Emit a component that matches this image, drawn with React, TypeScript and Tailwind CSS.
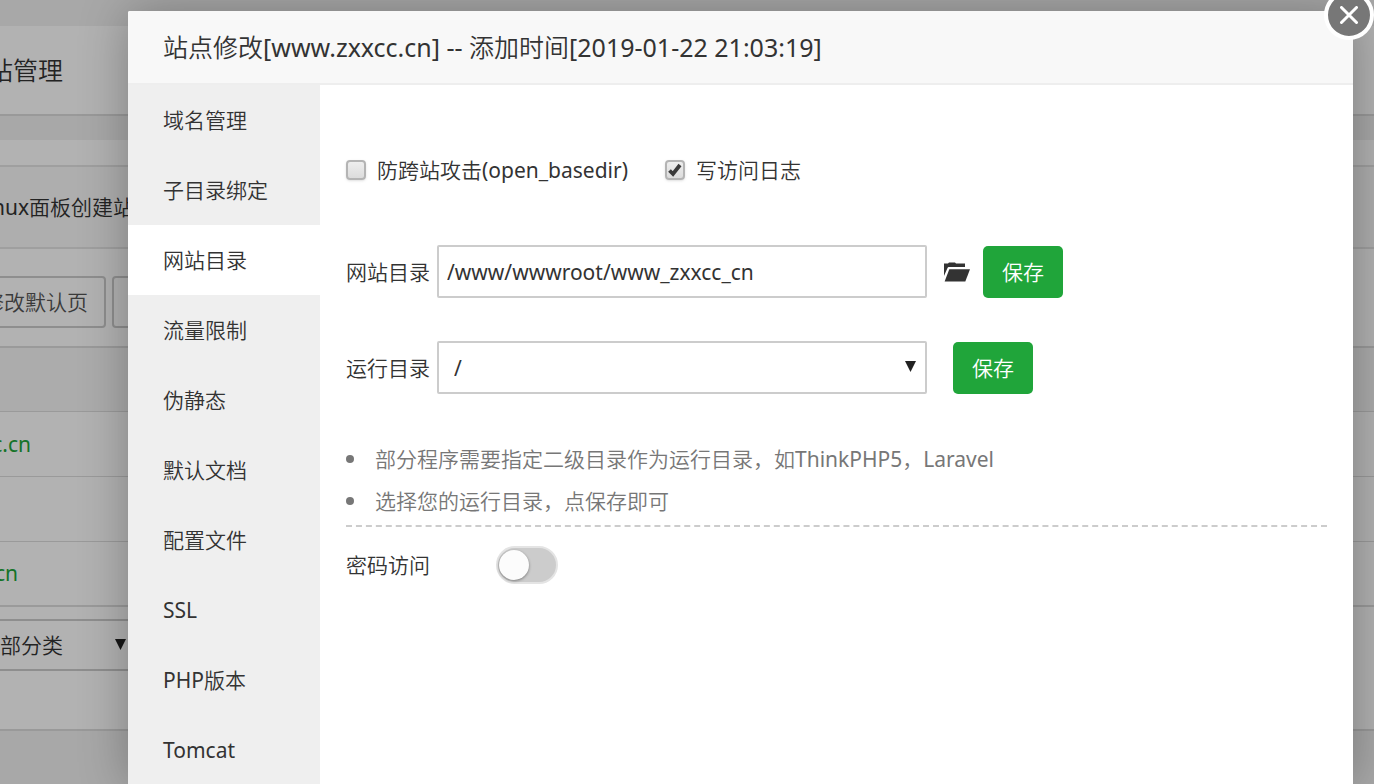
import { useState } from "react";
import clsx from "clsx";

const TABS = [
  "域名管理",
  "子目录绑定",
  "网站目录",
  "流量限制",
  "伪静态",
  "默认文档",
  "配置文件",
  "SSL",
  "PHP版本",
  "Tomcat",
];

const SITES = ["zxxcc.cn", "", "cn"];

export default function App() {
  return (
    <div className="relative h-screen overflow-hidden bg-[#f1f1f1] font-['Noto_Sans','Noto_Sans_CJK_SC_DemiLight','Noto_Sans_CJK_SC_Light','Noto_Sans_CJK_SC',sans-serif] text-[21px] leading-[30px] text-[#333]">
      <SitePage />
      <div className="absolute inset-0 flex items-stretch bg-black/30 pt-[11px] pr-[21px] pl-32">
        <SiteDialog />
      </div>
    </div>
  );
}

/* 背景页面 */
function SitePage() {
  return (
    <div className="pt-[26px]">
      <header className="flex h-[90px] items-center border-b-2 border-[#dcdcdc] bg-white">
        <div className="flex w-[63px] justify-end text-[25px] whitespace-nowrap">网站管理</div>
      </header>

      <main className="mt-6 border-b-2 border-[#dcdcdc] bg-white pt-[25px]">
        <div className="flex h-[84px] items-center border-y-2 border-[#e4e4e4] bg-[#fafafa]">
          <div className="flex w-[155px] justify-end whitespace-nowrap">Linux面板创建站点</div>
        </div>

        <div className="flex h-[97px] items-end gap-[6px] pb-[18px]">
          <div className="flex w-[106px] justify-end">
            <button className="h-[52px] shrink-0 rounded border-2 border-[#ccc] px-4 whitespace-nowrap text-[#555]">
              修改默认页
            </button>
          </div>
          <button className="h-[52px] rounded border-2 border-[#ccc] px-4 text-[#555]">分类</button>
        </div>

        <table className="w-full border-collapse border-y-2 border-[#ddd]">
          <thead>
            <tr className="h-16 bg-[#f6f6f6]">
              <th></th>
            </tr>
          </thead>
          <tbody>
            {SITES.map((site, i) => (
              <tr key={i} className="h-[65px] border-t border-[#ddd]">
                <td className="p-0">
                  {site && (
                    <a
                      href="#site"
                      className={clsx("flex justify-end whitespace-nowrap text-[#20a53a]", i === 0 ? "w-[31px]" : "w-[18px]")}
                    >
                      {site}
                    </a>
                  )}
                </td>
              </tr>
            ))}
          </tbody>
        </table>

        <div className="relative mt-3 mb-[58px] h-[52px] w-[140px]">
          <select
            aria-label="分类"
            className="-ml-9 h-full w-[176px] appearance-none border-2 border-[#ccc] bg-white pl-[13px]"
          >
            <option>全部分类</option>
          </select>
          <Arrow className="right-[14px]" />
        </div>
      </main>
    </div>
  );
}

/* 站点修改弹窗 */
function SiteDialog() {
  const [tab, setTab] = useState("网站目录");

  return (
    <div
      role="dialog"
      aria-label="站点修改"
      className="relative flex flex-1 flex-col rounded-t-xs bg-white shadow-[1px_1px_50px_rgba(0,0,0,0.3)]"
    >
      <h2 className="flex h-[74px] shrink-0 items-center rounded-t-xs border-b-2 border-[#eee] bg-[#f8f8f8] pl-[35px] text-[25px]">
        站点修改[www.zxxcc.cn] -- 添加时间[2019-01-22 21:03:19]
      </h2>
      <CloseButton />

      <div className="flex min-h-0 flex-1">
        <nav className="w-48 shrink-0 overflow-hidden bg-[#efefef]">
          {TABS.map((name) => (
            <button
              key={name}
              onClick={() => setTab(name)}
              className={clsx("block h-[70px] w-full pl-[35px] text-left", tab === name && "bg-white")}
            >
              {name}
            </button>
          ))}
        </nav>
        <DirectoryForm />
      </div>
    </div>
  );
}

function DirectoryForm() {
  const [path, setPath] = useState("/www/wwwroot/www_zxxcc_cn");

  return (
    <div className="min-w-0 flex-1 px-[26px] pt-[70px]">
      <div className="flex h-[30px] items-center gap-[37px]">
        <CheckBox label="防跨站攻击(open_basedir)" />
        <CheckBox label="写访问日志" checked />
      </div>

      <div className="mt-[60px] flex h-[53px] items-center">
        <label htmlFor="site-path" className="mr-[7px] w-[84px] whitespace-nowrap">网站目录</label>
        <input
          id="site-path"
          value={path}
          onChange={(e) => setPath(e.target.value)}
          className="h-[53px] w-[490px] rounded-xs border-2 border-[#ccc] px-2"
        />
        <button aria-label="选择目录" className="mr-[13px] ml-[17px]">
          <FolderIcon />
        </button>
        <SaveButton />
      </div>

      <div className="mt-[43px] flex h-[53px] items-center">
        <label htmlFor="run-path" className="mr-[7px] w-[84px] whitespace-nowrap">运行目录</label>
        <div className="relative mr-[26px]">
          <select
            id="run-path"
            className="block h-[53px] w-[490px] appearance-none rounded-xs border-2 border-[#ccc] bg-white px-[15px]"
          >
            <option>/</option>
          </select>
          <Arrow className="right-[11px]" />
        </div>
        <SaveButton />
      </div>

      <ul className="mt-11 border-b-2 border-dashed border-[#ccc] pb-[3px] leading-[42px] text-[#777]">
        <Tip>部分程序需要指定二级目录作为运行目录，如ThinkPHP5，Laravel</Tip>
        <Tip>选择您的运行目录，点保存即可</Tip>
      </ul>

      <div className="mt-[19px] flex h-[38px] items-center">
        <label htmlFor="pwd-switch" className="w-[150px]">密码访问</label>
        <Switch id="pwd-switch" />
      </div>
    </div>
  );
}

function CheckBox({ label, checked }: { label: string; checked?: boolean }) {
  return (
    <label className="flex items-center gap-[11px] whitespace-nowrap">
      <span className="relative">
        <input
          type="checkbox"
          defaultChecked={checked}
          className="peer block size-5 appearance-none rounded border-2 border-[#b4b4b4] bg-linear-to-b from-[#eee] to-[#dcdcdc] shadow-sm"
        />
        <svg viewBox="0 0 20 20" className="pointer-events-none absolute inset-0 hidden size-5 peer-checked:block">
          <path d="M4.5 10.5 8 14 15 5" fill="none" stroke="#3a3a3a" strokeWidth="3.8" />
        </svg>
      </span>
      {label}
    </label>
  );
}

function SaveButton() {
  return <button className="h-[52px] w-20 rounded-[5px] bg-[#20a53a] text-white">保存</button>;
}

function Tip({ children }: { children: string }) {
  return (
    <li className="flex items-center gap-[21px]">
      <span className="size-2 rounded-full bg-[#777]" />
      {children}
    </li>
  );
}

function Switch({ id }: { id: string }) {
  return (
    <span className="relative block">
      <input
        id={id}
        type="checkbox"
        className="peer block h-[38px] w-[62px] appearance-none rounded-full border-2 border-[#e4e4e4] bg-[#ccc] checked:bg-[#20a53a]"
      />
      <span className="pointer-events-none absolute top-1 left-[3px] size-[30px] rounded-full bg-[#fcfcfc] shadow-[0_1px_3px_rgba(0,0,0,0.4)] peer-checked:left-7" />
    </span>
  );
}

function Arrow({ className }: { className: string }) {
  return (
    <svg
      viewBox="0 0 10 10"
      className={clsx("pointer-events-none absolute top-5 size-[11px] fill-[#222]", className)}
    >
      <path d="M0 0H10L5 10Z" />
    </svg>
  );
}

function FolderIcon() {
  return (
    <svg viewBox="0 0 26 20" className="h-5 w-[26px] fill-[#333]">
      <path d="M0 14V1.5H4L5 .5H11L12 1.5H21V5H4.5L3.6 5.8Z" />
      <path d="M5.3 7.2H26L21.3 19.5H.6Z" />
    </svg>
  );
}

function CloseButton() {
  return (
    <button
      aria-label="关闭"
      className="absolute -top-[21px] -right-[21px] flex size-[50px] items-center justify-center rounded-full border-4 border-white bg-[#777]"
    >
      <svg viewBox="0 0 18 18" className="size-[18px]">
        <path d="M1.5 1.5 16.5 16.5M16.5 1.5 1.5 16.5" stroke="#fff" strokeWidth="3" strokeLinecap="round" />
      </svg>
    </button>
  );
}
